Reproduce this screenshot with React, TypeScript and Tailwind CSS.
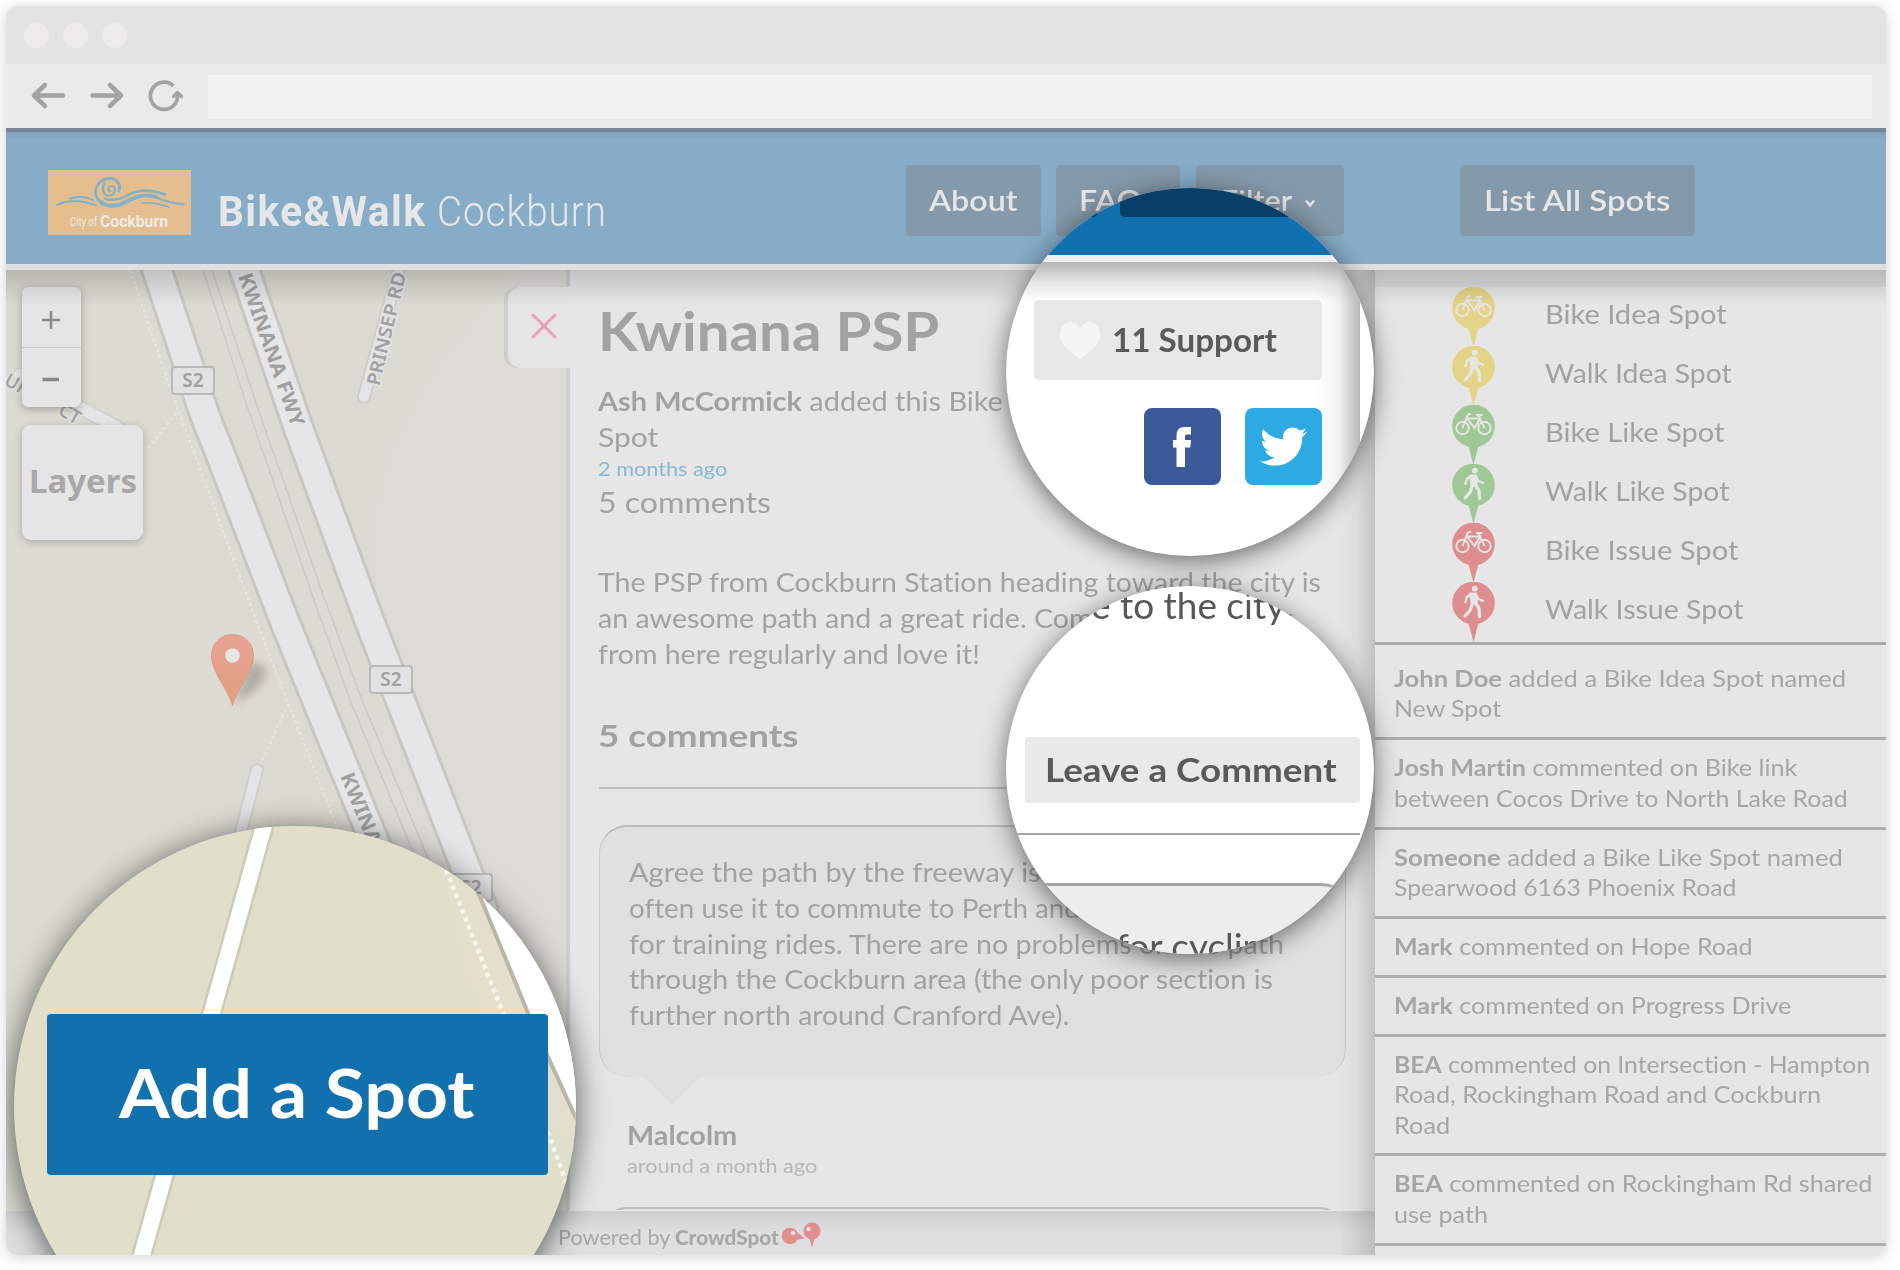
import { useLayoutEffect, useRef, useState, type ReactNode } from "react";
import { FaTwitter } from "react-icons/fa";

/* A single line of text widened to a given measure. */
function Fit({ w, className = "", children }: { w: number; className?: string; children: ReactNode }) {
  const ref = useRef<HTMLSpanElement>(null);
  const [scale, setScale] = useState(1);
  useLayoutEffect(() => {
    if (ref.current) setScale(w / ref.current.offsetWidth);
  }, [w]);
  return (
    <span className="-ml-px block" style={{ width: w }}>
      <span
        ref={ref}
        className={"inline-block origin-left whitespace-nowrap " + className}
        style={{ transform: `scaleX(${scale})` }}
      >
        {children}
      </span>
    </span>
  );
}

const legend = [
  { label: "Bike Idea Spot", w: 182, color: "#e5d388", bike: true },
  { label: "Walk Idea Spot", w: 187, color: "#e5d388", bike: false },
  { label: "Bike Like Spot", w: 179, color: "#9fc896", bike: true },
  { label: "Walk Like Spot", w: 184, color: "#9fc896", bike: false },
  { label: "Bike Issue Spot", w: 193, color: "#de8e8e", bike: true },
  { label: "Walk Issue Spot", w: 198, color: "#de8e8e", bike: false },
];

const feed: { who: string; lines: [string, number][] }[] = [
  { who: "John Doe", lines: [[" added a Bike Idea Spot named", 452], ["New Spot", 107]] },
  { who: "Josh Martin", lines: [[" commented on Bike link", 403], ["between Cocos Drive to North Lake Road", 454]] },
  { who: "Someone", lines: [[" added a Bike Like Spot named", 449], ["Spearwood 6163 Phoenix Road", 342]] },
  { who: "Mark", lines: [[" commented on Hope Road", 359]] },
  { who: "Mark", lines: [[" commented on Progress Drive", 397]] },
  {
    who: "BEA",
    lines: [[" commented on Intersection - Hampton", 476], ["Road, Rockingham Road and Cockburn", 427], ["Road", 56]],
  },
  { who: "BEA", lines: [[" commented on Rockingham Rd shared", 479], ["use path", 94]] },
];

function Pin({ color, bike }: { color: string; bike: boolean }) {
  return (
    <svg width="43" height="60" viewBox="0 0 43 60" className="block">
      <circle cx="21.500" cy="21" r="21.300" fill={color} />
      <path d="M16 39h11l-5.500 21z" fill={color} />
      {bike ? (
        <g fill="none" stroke="#e6e6e6" strokeWidth="2">
          <circle cx="10.500" cy="23" r="6.200" />
          <circle cx="32.500" cy="23" r="6.200" />
          <path d="M10.500 23L15.500 10.500Q16 8.500 19 9M15 13.500H28L22.500 23L15 13.500M26.500 10.500L32.500 23M22.500 23L28 14M24 10h6.500" />
        </g>
      ) : (
        <g fill="none" stroke="#e6e6e6" strokeWidth="2.800" strokeLinecap="round" strokeLinejoin="round">
          <circle cx="22.800" cy="6.600" r="2.900" fill="#e6e6e6" stroke="none" />
          <path d="M18.500 12L24 12L24.500 20.500L20 21.500z" fill="#e6e6e6" />
          <path d="M18 12.500L14.800 15L13.500 20M24.500 13.500L26.500 17L31 18.800" strokeWidth="2.400" />
          <path d="M20.500 21.500L18 28.500L13 34M23.500 21L27 26.500L27.500 34.500" strokeWidth="3.300" />
        </g>
      )}
    </svg>
  );
}

function Shield({ x, y }: { x: number; y: number }) {
  return (
    <g>
      <rect x={x} y={y} width="42" height="27" rx="3" fill="#e2e2e0" stroke="#b9b9b5" strokeWidth="2" />
      <text x={x + 21} y={y + 20} textAnchor="middle" fontSize="19" fontWeight="600" fill="#a1a1a1">
        S2
      </text>
    </g>
  );
}

function MapCanvas() {
  const freeway = "M152 255L157 270L189 367Q203 413 216 443L284 620L374 841L400 905";
  const freeway2 = "M239 255L244.500 270L298 427L369 620L467 871L485 915";
  return (
    <svg width="564" height="941" viewBox="6 270 564 941" className="block" fontFamily="'Noto Sans', sans-serif">
      <rect x="6" y="270" width="564" height="941" fill="#dbdbd3" />
      <path d="M570 270H520L440 360L395 445L372 520V640L400 860L440 1211H570z" fill="#dcdbd6" />
      <g fill="none" strokeLinecap="round">
        <path d="M20 375L118 428" stroke="#d0d0c9" strokeWidth="15" />
        <path d="M20 375L118 428" stroke="#e5e5e5" strokeWidth="12" />
        <path d="M404 250L364 397" stroke="#cfcfc9" strokeWidth="14" />
        <path d="M404 250L364 397" stroke="#e4e4e4" strokeWidth="10" />
        <path d="M257 770L230 874" stroke="#cfcfc9" strokeWidth="14" />
        <path d="M257 770L230 874" stroke="#e4e4e4" strokeWidth="10" />
      </g>
      <g fill="none" stroke="#cbcac9" strokeWidth="1.700">
        <path d="M203 270L245 400L314 600L350 700L413 852L432 895" />
        <path d="M212 270L255 400L325 600L362 700L427 856L445 895" />
      </g>
      <g fill="none" stroke="#e6e6e2" strokeWidth="2" strokeDasharray="3 3">
        <path d="M130 270L172 393L256 620L288 703L335 822L350 860" />
        <path d="M176 413L147 450" />
        <path d="M288 703L261 764" />
      </g>
      <path d={freeway} fill="none" stroke="#c8c8c1" strokeWidth="33" />
      <path d={freeway2} fill="none" stroke="#c8c8c1" strokeWidth="33" />
      <path d={freeway} fill="none" stroke="#e6e6e6" strokeWidth="27" />
      <path d={freeway2} fill="none" stroke="#e6e6e6" strokeWidth="27" />
      <g fill="#a0a0a0" fontWeight="700">
        <text transform="translate(238 276) rotate(70.500)" fontSize="20" textLength="161" lengthAdjust="spacingAndGlyphs">
          KWINANA FWY
        </text>
        <text transform="translate(340 776) rotate(67.500)" fontSize="20" textLength="161" lengthAdjust="spacingAndGlyphs">
          KWINANA FWY
        </text>
      </g>
      <g fill="#a2a2a2" fontWeight="600" stroke="#e4e4e0" strokeWidth="3" paintOrder="stroke">
        <text transform="translate(375 404) rotate(-76.500)" x="18" fontSize="18.500" textLength="116" lengthAdjust="spacingAndGlyphs">
          PRINSEP RD
        </text>
        <text transform="translate(3 384) rotate(29)" fontSize="18.500">
          UR
        </text>
        <text transform="translate(57 414) rotate(29)" fontSize="18.500">
          CT
        </text>
      </g>
      <Shield x={172} y={367} />
      <Shield x={370} y={666} />
      <Shield x={450} y={874} />
      <defs>
        <linearGradient id="pin" x1="0" y1="0" x2="0" y2="1">
          <stop offset="0" stopColor="#e8a294" />
          <stop offset="1" stopColor="#e09f7d" />
        </linearGradient>
        <filter id="soft" x="-50%" y="-50%" width="200%" height="200%">
          <feGaussianBlur stdDeviation="4" />
        </filter>
      </defs>
      <path d="M234 703L248 665Q262 658 266 672Q264 690 234 703z" fill="#000" opacity="0.200" filter="url(#soft)" />
      <path
        d="M232.500 705.500C229 690 211.500 673 211.500 655.500A21 21 0 0 1 253.500 655.500C253.500 673 236 690 232.500 705.500z"
        fill="url(#pin)"
        stroke="#dd9887"
        strokeWidth="1"
      />
      <circle cx="232.500" cy="655.500" r="7.300" fill="#e6e6e6" />
    </svg>
  );
}

function NavButton({ className, children }: { className: string; children: ReactNode }) {
  return (
    <div
      className={
        "flex h-[71px] shrink-0 items-center rounded-[4px] bg-[#8499a9] pb-px text-[29px] font-semibold text-[#e6e6e6] " +
        className
      }
    >
      {children}
    </div>
  );
}

function Browser() {
  return (
    <>
      <div className="flex h-[58px] items-center gap-[14px] bg-[#e3e3e3] pl-[18px]">
        <div className="size-[25px] rounded-full bg-[#edebec]" />
        <div className="size-[25px] rounded-full bg-[#edebec]" />
        <div className="size-[25px] rounded-full bg-[#edebec]" />
      </div>
      <div className="flex h-[64px] items-center bg-[#eaeaea] pr-[14px]">
        <svg
          width="202"
          height="64"
          viewBox="6 64 202 64"
          fill="none"
          stroke="#a2a4a3"
          strokeWidth="4.500"
          strokeLinecap="round"
          strokeLinejoin="round"
        >
          <path d="M63 95.500H34M45 85L34 95.500L45 106" />
          <path d="M92.500 95.500H121M110 85L121 95.500L110 106" />
          <path d="M173.500 86A13.600 13.600 0 1 0 177.500 94" strokeWidth="3.700" strokeLinecap="butt" />
          <path d="M173.500 96.500L177.500 92.500L181.500 96.500" strokeWidth="3.500" />
        </svg>
        <div className="mt-[2px] h-[44px] grow bg-[#f2f2f2]" />
      </div>
    </>
  );
}

function Header() {
  return (
    <div className="flex h-[142px] border-b-[6px] border-[#e0e0e0] bg-[#86acc7] bg-linear-to-b from-[#7b9cb4] via-[#86acc7] via-8% to-[#86acc7] shadow-[inset_0_4px_0_#758899]">
      <svg width="143" height="65" viewBox="0 0 143 65" className="mt-[42px] ml-[42px] shrink-0">
        <rect width="143" height="65" fill="#e4be8e" />
        <g fill="none" stroke="#84b1c8" strokeLinecap="round" strokeLinejoin="round">
          <path
            d="M62.500 21.500C59.500 21 59.500 16.500 63 16C68.500 15.500 68 24 62.500 25.500C55.500 26.500 53 18.500 56.500 13.500"
            strokeWidth="2.200"
          />
          <path d="M71 21C74 13 67 8 60.500 8.500C50 9.500 45 20 49 27.500C50 30 52 32 55 33.500" strokeWidth="2.800" />
          <path d="M53 32.500C60 37.500 70 36.500 77 32.500C90 25.500 98 23.500 108 27" strokeWidth="3.800" />
          <path d="M104 26C116 31 126 33.500 136 34.500" strokeWidth="2" />
          <path d="M57 28.500C66 32 75 28.500 84 23C94 19 106 20.500 117 24.500" strokeWidth="2.600" />
          <path d="M94 33C103 32 110 34 121 37" strokeWidth="1.700" />
          <path d="M9 35C20 29.500 34 30 48 35.500M22 28.500C30 25.500 38 26.500 45 30" strokeWidth="1.900" />
        </g>
        <text x="22" y="56" fontFamily="Roboto, sans-serif" fontSize="12" fill="#eee9df" textLength="27" lengthAdjust="spacingAndGlyphs">
          City of
        </text>
        <text
          x="52"
          y="56.500"
          fontFamily="Roboto, sans-serif"
          fontWeight="700"
          fontSize="16.500"
          fill="#f0ece6"
          textLength="68"
          lengthAdjust="spacingAndGlyphs"
        >
          Cockburn
        </text>
      </svg>
      <div className="mt-[59px] ml-[28px] flex shrink-0 font-['Roboto'] text-[42.500px] leading-[50px] text-[#e7e7e7]">
        <Fit w={208} className="font-bold tracking-[1.500px]">
          Bike&amp;Walk
        </Fit>
        <div className="ml-[12px]">
          <Fit w={170} className="font-light tracking-[1px]">
            Cockburn
          </Fit>
        </div>
      </div>
      <div className="mt-[37px] ml-auto flex gap-[16px] pr-[191px]">
        <NavButton className="w-[135px] pl-[24px]">
          <Fit w={89}>About</Fit>
        </NavButton>
        <NavButton className="-ml-px w-[124px] pl-[24px]">
          <Fit w={63}>FAQ</Fit>
        </NavButton>
        <NavButton className="w-[148px] pl-[26px]">
          <Fit w={71}>Filter</Fit>
          <svg width="12" height="9" viewBox="0 0 12 9" className="mt-[6px] ml-[12px]">
            <path d="M2 1.500L6 6.500L10 1.500" fill="none" stroke="#e6e6e6" strokeWidth="2.400" />
          </svg>
        </NavButton>
        <NavButton className="ml-[100px] w-[235px] pl-[25px]">
          <Fit w={186}>List All Spots</Fit>
        </NavButton>
      </div>
    </div>
  );
}

function SpotPanel() {
  return (
    <div className="relative flex h-[941px] w-[805px] shrink-0 flex-col bg-[#e6e6e6] pl-[29px] text-[#a2a2a2]">
      <div className="mt-[31px] text-[53px] leading-[60px] font-bold">
        <Fit w={341}>Kwinana PSP</Fit>
      </div>
      <div className="mt-[23px] text-[26.500px] leading-[35.600px]">
        <Fit w={405}>
          <b>Ash McCormick</b> added this Bike
        </Fit>
        <Fit w={60}>Spot</Fit>
      </div>
      <div className="mt-[2px] text-[19.500px] leading-[24px] text-[#82bad8]">
        <Fit w={129}>2 months ago</Fit>
      </div>
      <div className="mt-[3px] text-[29.500px] leading-[36px]">
        <Fit w={173}>5 comments</Fit>
      </div>
      <div className="mt-[45px] text-[26.500px] leading-[35.670px]">
        <Fit w={723}>The PSP from Cockburn Station heading toward the city is</Fit>
        <Fit w={695}>an awesome path and a great ride. Commute to the city</Fit>
        <Fit w={382}>from here regularly and love it!</Fit>
      </div>
      <div className="mt-[45px] text-[30px] leading-[36px] font-bold">
        <Fit w={200}>5 comments</Fit>
      </div>
      <div className="mt-[34px] h-[2px] w-[747px] shrink-0 bg-[#bebebe]" />
      <div className="relative mt-[36px] h-[252px] w-[747px] shrink-0 rounded-[28px] border-t-[2px] border-r-[1.500px] border-l-[1.500px] border-t-[#bdbdbd] border-r-[#cbcbcb] border-l-[#cbcbcb] bg-[#e0e0e0] pt-[28px] pl-[29.500px] text-[26.500px] leading-[35.750px]">
        <Fit w={641}>Agree the path by the freeway is fantastic to ride. I</Fit>
        <Fit w={666}>often use it to commute to Perth and out on weekends</Fit>
        <Fit w={655}>for training rides. There are no problems on the path</Fit>
        <Fit w={644}>through the Cockburn area (the only poor section is</Fit>
        <Fit w={440}>further north around Cranford Ave).</Fit>
        <svg width="58" height="30" viewBox="0 0 58 30" className="absolute top-[249px] left-[43px]">
          <path d="M0 0H58L29 29z" fill="#e0e0e0" />
        </svg>
      </div>
      <div className="mt-[42px] ml-[29px] text-[27px] leading-[32px] font-bold">
        <Fit w={110}>Malcolm</Fit>
      </div>
      <div className="mt-[3px] ml-[29px] text-[19.500px] leading-[24px] text-[#b6b6b6]">
        <Fit w={190}>around a month ago</Fit>
      </div>
      <div className="mt-[29px] h-[3px] w-[748px] overflow-hidden">
        <div className="h-[60px] rounded-[28px] border-t-[2px] border-[#bdbdbd]" />
      </div>
      <div className="absolute inset-y-0 right-0 w-[36px] bg-linear-to-r from-transparent via-black/4 to-black/16" />
    </div>
  );
}

function Sidebar() {
  return (
    <div className="h-[985px] w-[511px] shrink-0 overflow-hidden bg-[#e6e6e6] text-[#a6a6a6]">
      <div className="h-[17px] bg-[#dcdcdc]" />
      <div className="h-[355px]">
        {legend.map((s) => (
          <div key={s.label} className="flex h-[59.100px] pl-[76.500px]">
            <Pin color={s.color} bike={s.bike} />
            <div className="mt-[10px] ml-[51px] text-[26.500px] leading-[34px] text-[#a2a2a2]">
              <Fit w={s.w}>{s.label}</Fit>
            </div>
          </div>
        ))}
      </div>
      <div className="h-[9px] border-t-[3px] border-[#a9a9a9]" />
      {feed.map((f, i) => (
        <div key={i} className="border-b-[3px] border-[#aeaeae] pt-[12px] pb-[13.500px] pl-[19.500px] text-[23.500px] leading-[30.400px]">
          {f.lines.map(([t, w], j) => (
            <Fit key={j} w={w}>
              {j === 0 && <b>{f.who}</b>}
              {t}
            </Fit>
          ))}
        </div>
      ))}
    </div>
  );
}

function SupportLens() {
  return (
    <div className="absolute top-[182px] left-[1000px] size-[368px] overflow-hidden rounded-full bg-white shadow-[0_5px_26px_rgba(0,0,0,0.55)]">
      <div className="flex h-[67px] items-start justify-between bg-[#1170ae]">
        <div className="h-[29px] w-[92px] rounded-[5px] bg-[#083f66]" />
        <div className="h-[29px] w-[254px] rounded-bl-[5px] bg-[#083f66]" />
      </div>
      <div className="h-[7px] bg-[#ededed]" />
      <div className="h-[40px] bg-linear-to-b from-[#b4b4b4] via-[#e6e6e6] to-white" />
      <div className="absolute top-[74px] left-[310px] h-[294px] w-[44px] bg-linear-to-r from-transparent via-black/5 to-black/28" />
      <div className="absolute top-[112px] left-[28px] flex h-[80px] w-[288px] items-center rounded-[5px] bg-[#e8e8e8] pl-[25px] text-[32px] font-bold text-[#595b5b]">
        <svg width="42" height="37" viewBox="0 0 42 37" className="mr-[12px] shrink-0">
          <path
            d="M21 37C15 33 6 25 3 20C-2 12 2 1 11 0C16 0 20 3 21 7C22 3 26 0 31 0C40 1 44 12 39 20C36 25 27 33 21 37z"
            fill="#f5f5f5"
          />
        </svg>
        <Fit w={165}>11 Support</Fit>
      </div>
      <div className="absolute top-[220px] left-[138px] flex gap-[24px]">
        <div className="flex size-[77px] items-center justify-center rounded-[8px] bg-[#3b5998]">
          <svg width="18" height="40" viewBox="0 0 18 40" className="mr-px">
            <path
              d="M3.500 40V20.500H0V13H3.500V9.500C3.500 3 6 0 12 0H18V7.500H14.500C12.500 7.500 12 8.300 12 10V13H18L17.300 20.500H12V40z"
              fill="#fff"
            />
          </svg>
        </div>
        <div className="flex size-[77px] items-center justify-center rounded-[8px] bg-[#2daae1]">
          <FaTwitter size="47" color="#fff" />
        </div>
      </div>
    </div>
  );
}

function CommentLens() {
  return (
    <div className="absolute top-[580px] left-[1000px] size-[368px] overflow-hidden rounded-full bg-white text-[#565858] shadow-[0_5px_26px_rgba(0,0,0,0.55)]">
      <div className="ml-[86px] h-[151px] text-[36px] leading-[38px]">
        <Fit w={194}>e to the city</Fit>
      </div>
      <div className="ml-[19px] flex h-[66px] w-[335px] items-center rounded-[4px] bg-[#e9e9e9] pb-px pl-[21px] text-[32px] font-bold text-[#595b5b]">
        <Fit w={292}>Leave a Comment</Fit>
      </div>
      <div className="mt-[30px] h-[2px] w-[354px] bg-[#a4a4a4]" />
      <div className="mt-[48px] -ml-[40px] h-[120px] w-[394px] rounded-tr-[40px] border-t-[3px] border-[#a4a4a4] bg-[#ededed] pt-[38px] pl-[151px] text-[36px] leading-[44px]">
        <Fit w={166}>for cycling</Fit>
      </div>
    </div>
  );
}

function AddSpotLens() {
  return (
    <div className="absolute top-[820px] left-[8px] size-[562px] overflow-hidden rounded-full bg-[#e1deca] shadow-[0_5px_32px_rgba(0,0,0,0.62)]">
      <svg width="562" height="562" viewBox="14 826 562 562" className="absolute inset-0">
        <path d="M440 860L466 826H576V1160L550 1120L470 990L455 935z" fill="#e4dfcd" />
        <path d="M265 822L211.500 1014L164.500 1175L140 1262" fill="none" stroke="#cdcab7" strokeWidth="21" />
        <path d="M265 822L211.500 1014L164.500 1175L140 1262" fill="none" stroke="#fff" strokeWidth="16" />
        <path d="M463 860L481 899L528 1013L580 1127V860z" fill="#fff" />
        <path d="M463 860L481 899L528 1013L580 1127" fill="none" stroke="#b9b5a7" strokeWidth="4" />
        <path d="M443 862L503 1013L548 1133L568 1187" fill="none" stroke="#f6f5ee" strokeWidth="4.500" strokeDasharray="4.500 4" />
      </svg>
      <div className="relative mt-[188px] ml-[33px] flex h-[161px] w-[501px] items-center rounded-[4px] bg-[#1170ae] pb-[4px] pl-[73px] text-[66px] font-bold text-white">
        <Fit w={356}>Add a Spot</Fit>
      </div>
    </div>
  );
}

export default function App() {
  return (
    <div className="h-[1270px] w-[1900px] overflow-hidden bg-white p-[6px] font-['Lato',sans-serif] [font-variant-ligatures:none]">
      <div className="relative h-[1249px] w-[1880px] overflow-hidden rounded-[12px] bg-[#e6e6e6] shadow-[0_2px_14px_rgba(0,0,0,0.18)]">
        <Browser />
        <Header />
        <div className="relative flex">
          <div>
            <div className="flex">
              <div className="relative w-[564px] shrink-0 overflow-hidden">
                <MapCanvas />
                <div className="absolute inset-y-0 right-0 w-[4px] bg-[#cfcfc9]" />
                <div className="absolute top-[17px] right-0 flex h-[81px] w-[62px] items-center justify-center rounded-l-[13px] bg-[#e5e5e5] shadow-[-4px_0_0_#cfcfc9]">
                  <svg width="26" height="26" viewBox="0 0 26 26" className="mb-[3px] ml-[9px]">
                    <path d="M2 2L24 24M24 2L2 24" stroke="#e9a2b8" strokeWidth="3" strokeLinecap="round" />
                  </svg>
                </div>
                <div className="absolute top-[17px] left-[16px] h-[120px] w-[59px] rounded-[6px] bg-[#e5e5e5] shadow-[0_2px_9px_rgba(0,0,0,0.28)]">
                  <svg width="59" height="120" viewBox="0 0 59 120" fill="none" stroke="#888" strokeWidth="2.500">
                    <path d="M20 33H38M29 24V42" />
                    <path d="M20.500 92.500H37" strokeWidth="3.500" />
                    <path d="M0 60.500H59" stroke="#c9c9c9" strokeWidth="1.200" />
                  </svg>
                </div>
                <div className="absolute top-[155px] left-[16px] h-[115px] w-[121px] rounded-[9px] bg-[#e5e5e5] pt-[32px] pl-[8px] font-['Noto_Sans'] text-[33px] leading-[48px] font-bold text-[#a8a8a8] shadow-[0_2px_9px_rgba(0,0,0,0.22)]">
                  <Fit w={108}>Layers</Fit>
                </div>
              </div>
              <SpotPanel />
            </div>
            <div className="relative flex h-[44px] items-center bg-linear-to-b from-[#cfcfcf] to-[#dfdfdf] to-50% pt-[9px] pl-[553px] text-[20.500px] text-[#a8a8a8]">
              <Fit w={112}>Powered by</Fit>
              <div className="ml-[6px] font-black">
                <Fit w={104}>CrowdSpot</Fit>
              </div>
              <svg width="42" height="26" viewBox="0 0 42 26" className="mb-[5px] ml-[2px]" fill="#e08e8e">
                <circle cx="9" cy="14" r="8.300" />
                <path d="M15 9L23.500 16.500L15 18z" />
                <circle cx="31" cy="9" r="8.500" />
                <path d="M28 15h6L31 25.500z" />
                <circle cx="12" cy="11" r="2.300" fill="#e6e0e0" />
                <circle cx="27.500" cy="7" r="2.200" fill="#e6e0e0" />
              </svg>
              <div className="absolute inset-y-0 right-0 w-[36px] bg-linear-to-r from-transparent to-black/15" />
            </div>
          </div>
          <Sidebar />
          <div className="absolute inset-x-0 top-0 h-[36px] bg-linear-to-b from-black/16 to-transparent" />
        </div>
        <SupportLens />
        <CommentLens />
        <AddSpotLens />
      </div>
    </div>
  );
}
